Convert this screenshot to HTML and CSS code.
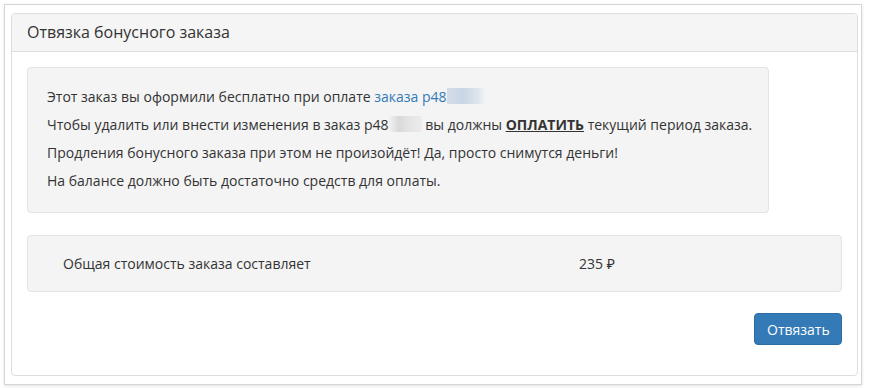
FILE: index.html
```html
<!DOCTYPE html>
<html lang="ru">
  <head>
    <meta charset="UTF-8" />
    <title>Отвязка бонусного заказа</title>
    <link rel="stylesheet" href="styles.css">
  </head>
  <body>
    <div class="frame">
      <div class="panel">
        <div class="panel-heading">Отвязка бонусного заказа</div>
        <div class="panel-body">
          <div class="well">
            <p>Этот заказ вы оформили бесплатно при оплате <a href="#">заказа р48<span class="blur blur-link"></span></a></p>
            <p>Чтобы удалить или внести изменения в заказ р48<span class="blur"></span> вы должны <b class="pay">ОПЛАТИТЬ</b> текущий период заказа.</p>
            <p>Продления бонусного заказа при этом не произойдёт! Да, просто снимутся деньги!</p>
            <p>На балансе должно быть достаточно средств для оплаты.</p>
          </div>
          <div class="total">
            <span>Общая стоимость заказа составляет</span>
            <span>235 ₽</span>
          </div>
          <div class="actions">
            <button type="button" class="btn">Отвязать</button>
          </div>
        </div>
      </div>
    </div>
  </body>
</html>
```

FILE: styles.css
```css
body {
  margin: 0;
  font-family: "Open Sans", "Noto Sans", sans-serif;
  font-size: 14px;
  color: #333;
  background: #fff;
}

.frame {
  margin: 4px;
  width: 847px;
  height: 365px;
  padding: 8px 3px 6px 6px;
  border: 1px solid #d6d6d6;
  box-shadow: 0 1px 3px rgba(0, 0, 0, 0.12);
}

.panel {
  border: 1px solid #ddd;
  border-radius: 4px;
  background: #fff;
  height: 361px;
}

.panel-heading {
  background: #f5f5f5;
  border-bottom: 1px solid #ddd;
  border-radius: 3px 3px 0 0;
  padding: 10px 15px;
  font-size: 16px;
  line-height: 17px;
}

.panel-body {
  padding: 15px;
}

.well {
  width: 702px;
  background: #f4f4f4;
  border: 1px solid #e3e3e3;
  border-radius: 4px;
  padding: 19px 19px 13px;
}

.well p {
  margin: 0 0 9px;
  line-height: 19px;
  white-space: nowrap;
}

.well a {
  color: #337ab7;
  text-decoration: none;
}

.blur {
  display: inline-block;
  width: 33px;
  height: 16px;
  vertical-align: -2px;
  background: linear-gradient(90deg, #f2f2f2, #d9d9d9 30%, #e4e4e4 60%, #ececec);
}

.blur-link {
  width: 38px;
  background: linear-gradient(90deg, #d3dde8, #c9d6e4 40%, #dde4ec 80%, #f1f3f5);
}

.pay {
  text-decoration: underline;
}

.total {
  display: grid;
  grid-template-columns: 516px 1fr;
  margin-top: 22px;
  padding: 18px 35px 17px;
  line-height: 20px;
  background: #f4f4f4;
  border: 1px solid #e3e3e3;
  border-radius: 4px;
}

.actions {
  display: flex;
  justify-content: flex-end;
  margin-top: 21px;
}

.btn {
  font-family: "Open Sans", "Noto Sans", sans-serif;
  font-size: 14px;
  color: #fff;
  background: #337ab7;
  border: 1px solid #2e6da4;
  border-radius: 4px;
  padding: 5px 12px;
  height: 32px;
  width: 88px;
  cursor: pointer;
}
```
